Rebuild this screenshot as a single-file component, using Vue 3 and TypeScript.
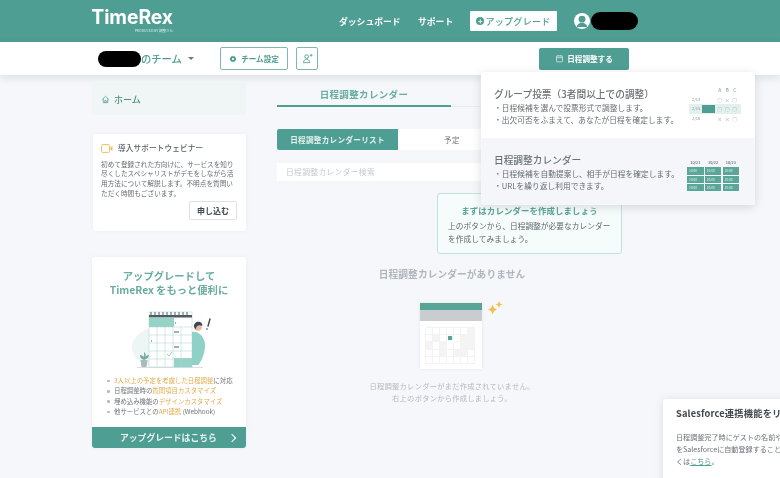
<script setup lang="ts">
const perks = [
  [['3人以上の予定を考慮した日程調整', true], ['に対応', false]],
  [['日程調整時の', false], ['質問項目カスタマイズ', true]],
  [['埋め込み機能の', false], ['デザインカスタマイズ', true]],
  [['他サービスとの', false], ['API連携', true], [' (Webhook)', false]],
] as [string, boolean][][]
const emptyCells = Array.from({ length: 35 }, (_, i) => i)
const shadedCells = [6, 8, 12, 13, 14, 16, 19, 20, 23, 25, 26]
const calHeads = ['10/21', '10/22', '10/23']
const calSlots = Array.from({ length: 9 }, () => '10:00')
const polls = [
  { d: '2/14', v: ['○', '×', '○'], on: false },
  { d: '2/15', v: ['○', '○', '○'], on: true },
  { d: '2/16', v: ['×', '×', '○'], on: false },
]
const gridX = [65, 73, 81, 89]
const gridY = [21, 29, 37, 45, 53]
const rings = [59, 63, 67, 71, 75, 79, 83, 87, 91, 95]
</script>

<template>
  <div class="page">
    <header class="top">
      <div class="logo">
        <span class="logo-name">TimeRex</span>
        <span class="logo-by">PRODUCED BY 調整さん</span>
      </div>
      <nav class="nav">
        <a class="nav-link">ダッシュボード</a>
        <a class="nav-link">サポート</a>
        <button class="upgrade-top"><span class="plus">+</span>アップグレード</button>
        <span class="user">
          <svg class="avatar" viewBox="0 0 16 16">
            <circle cx="8" cy="8" r="8" fill="#fff" />
            <circle cx="8" cy="6.2" r="3.4" fill="#4f9e93" />
            <path d="M2.6 14c.8-3 2.9-4.2 5.4-4.2s4.600 1.200 5.400 4.200" fill="#4f9e93" />
          </svg>
          <span class="mask mask-user"></span>
        </span>
      </nav>
    </header>

    <div class="subbar">
      <span class="mask mask-team"></span>
      <span class="team-name">のチーム</span>
      <span class="caret"></span>
      <button class="outline settings">
        <svg viewBox="0 0 12 12" class="gear">
          <path d="M6 .8l1.100 1.500 1.800-.5.300 1.800 1.800.6-.8 1.800.8 1.800-1.800.6-.3 1.800-1.800-.5L6 11.200 4.900 9.700l-1.800.5-.3-1.800L1 7.800l.8-1.800L1 4.200l1.800-.6.3-1.800 1.800.5z" fill="#4f9e93" />
          <circle cx="6" cy="6" r="1.600" fill="#fff" />
        </svg>
        チーム設定
      </button>
      <button class="outline invite">
        <svg viewBox="0 0 12 12" class="invite-icon">
          <circle cx="5" cy="4" r="2" fill="none" stroke="#4f9e93" />
          <path d="M1.500 10.500c.3-2.400 1.600-3.500 3.500-3.500s3.200 1.100 3.500 3.500zM8.500 2.500h3M10 1v3" fill="none" stroke="#4f9e93" stroke-width=".9" />
        </svg>
      </button>
      <button class="primary">
        <svg viewBox="0 0 12 12" class="cal-icon">
          <rect x="2" y="2.500" width="8" height="8" rx=".8" fill="none" stroke="#dcebe9" />
          <path d="M2 5h8M4 1.500v2M8 1.500v2" stroke="#dcebe9" />
        </svg>
        日程調整する
      </button>
    </div>

    <div class="body">
      <aside class="side">
        <div class="home">
          <svg viewBox="0 0 12 12" class="home-icon">
            <path d="M1.500 6 6 1.800 10.500 6M3 5v5.200h6V5M5 10.200V7.500h2v2.700" fill="none" stroke="#4f9e93" />
          </svg>
          ホーム
        </div>

        <section class="card webinar">
          <h3 class="webinar-title">
            <svg viewBox="0 0 12 9" class="video">
              <rect x=".6" y=".6" width="8" height="7.800" rx="1" fill="none" stroke="#f0bf63" stroke-width="1" />
              <path d="M9.500 3.200 11.500 2v5L9.500 5.800z" fill="#f0bf63" />
            </svg>
            導入サポートウェビナー
          </h3>
          <p class="webinar-text">初めて登録された方向けに、サービスを知り尽くしたスペシャリストがデモをしながら活用方法について解説します。不明点を質問いただく時間もございます。</p>
          <div class="apply-row"><button class="apply">申し込む</button></div>
        </section>

        <section class="card upgrade">
          <h2 class="up-title">アップグレードして<br />TimeRex をもっと便利に</h2>
          <svg class="up-art" viewBox="0 0 154 62">
            <ellipse cx="70" cy="41" rx="30" ry="21" fill="#edf6f5" />
            <path d="M45 61.500h66" stroke="#dcdde8" stroke-width="1" />
            <rect x="57" y="6" width="43" height="55" fill="#fff" stroke="#a9d5cf" stroke-width=".5" />
            <rect x="57" y="9" width="43" height="2.500" fill="#4d5c5e" />
            <path v-for="r in rings" :key="r" :d="`M${r} 6v4`" stroke="#4d5c5e" stroke-width="1" />
            <rect x="57" y="11.500" width="25" height="9.500" fill="#97d2c9" />
            <rect x="82" y="52" width="18" height="9" fill="#97d2c9" />
            <path v-for="x in gridX" :key="x" :d="`M${x} 21v40`" stroke="#a9d5cf" stroke-width=".5" />
            <path v-for="y in gridY" :key="y" :d="`M57 ${y}h43`" stroke="#a9d5cf" stroke-width=".5" />
            <path d="M83 17h1M82 26h5M82 41h5M59 35h1" stroke="#4d5c5e" stroke-width="1" />
            <path d="M75 48l2 2 3-4" stroke="#97d2c9" stroke-width="1" fill="none" />
            <path d="M100 26c6-1 12 4 13 12 .5 7-3 17-7 21h-6z" fill="#8fd0c7" />
            <circle cx="106" cy="21" r="3.800" fill="#e9b9a4" />
            <path d="M102 21c-.5-4 3-6 6-5 2 .7 2.500 2.500 2.200 4-2-1.500-5-1-6 1.500l-.5 2z" fill="#3d4658" />
            <path d="M118 13l-2 7" stroke="#3d4658" stroke-width="1.400" stroke-linecap="round" />
            <circle cx="115" cy="23" r=".8" fill="#3d4658" />
            <path d="M52 54c-3-1-4-3-4-5 2 0 3 1 4 2 0-2 0-3 0-5 2 2 2 3 1 5 1-1 2-2 4-2 0 2-2 4-5 5z" fill="#72a99f" />
            <path d="M48.500 54h7l-1 7h-5z" fill="#a7bdb9" />
          </svg>
          <ul class="perks">
            <li v-for="(p, i) in perks" :key="i">
              <span v-for="(s, j) in p" :key="j" :class="{ hot: s[1] }">{{ s[0] }}</span>
            </li>
          </ul>
          <button class="up-cta"><span>アップグレードはこちら</span><span class="chev"></span></button>
        </section>
      </aside>

      <main class="main">
        <div class="tabs">
          <div class="tab active">日程調整カレンダー</div>
          <div class="tab"></div>
        </div>
        <div class="segments">
          <div class="seg on">日程調整カレンダーリスト</div>
          <div class="seg mid">予定</div>
          <div class="seg"></div>
        </div>
        <div class="search">日程調整カレンダー検索</div>

        <div class="empty">
          <h4 class="empty-title">日程調整カレンダーがありません</h4>
          <div class="empty-art">
            <div class="empty-cal">
              <div class="e-green"></div>
              <div class="e-grey"></div>
              <div class="e-grid">
                <i v-for="c in emptyCells" :key="c" :class="{ shade: shadedCells.includes(c), mark: c === 10 }"></i>
              </div>
            </div>
            <svg class="sparkle" viewBox="0 0 16 16">
              <path d="M5.500 4.500 7 8l3 1.500L7 11l-1.500 3.500L4 11 1 9.500 4 8zM12 1l1 2.500 2.500 1-2.500 1L12 8l-1-2.500-2.500-1 2.500-1z" fill="#f0c04f" />
            </svg>
          </div>
          <p class="empty-text">日程調整カレンダーがまだ作成されていません。<br />右上のボタンから作成しましょう。</p>
        </div>

        <div class="hint">
          <div class="hint-title">まずはカレンダーを作成しましょう</div>
          <p class="hint-text">上のボタンから、日程調整が必要なカレンダーを作成してみましょう。</p>
        </div>
      </main>
    </div>

    <div class="menu">
      <div class="menu-item">
        <div class="menu-copy">
          <div class="menu-title">グループ投票（3者間以上での調整）</div>
          <div class="menu-line">・日程候補を選んで投票形式で調整します。</div>
          <div class="menu-line">・出欠可否をふまえて、あなたが日程を確定します。</div>
        </div>
        <div class="poll">
          <div class="poll-row head"><span></span><b>A</b><b>B</b><b>C</b></div>
          <div v-for="p in polls" :key="p.d" class="poll-row" :class="{ sel: p.on }">
            <span class="poll-date">{{ p.d }}<em v-if="p.on"></em></span>
            <b v-for="(v, i) in p.v" :key="i">{{ v }}</b>
          </div>
        </div>
      </div>
      <div class="menu-item alt">
        <div class="menu-copy">
          <div class="menu-title">日程調整カレンダー</div>
          <div class="menu-line">・日程候補を自動提案し、相手が日程を確定します。</div>
          <div class="menu-line">・URLを繰り返し利用できます。</div>
        </div>
        <div class="slots">
          <span v-for="h in calHeads" :key="h" class="slot-head">{{ h }}</span>
          <span v-for="(s, i) in calSlots" :key="i" class="slot">{{ s }}</span>
        </div>
      </div>
    </div>

    <aside class="notice">
      <div class="notice-title">Salesforce連携機能をリリースしました</div>
      <p class="notice-text">日程調整完了時にゲストの名前やメールアドレス<br />をSalesforceに自動登録することができます。詳し<br />くは<a>こちら</a>。</p>
    </aside>
  </div>
</template>

<style>
html, body { margin: 0; background: #f5f7fa; }
</style>

<style scoped>
* { box-sizing: border-box; }
.page {
  position: relative; width: 780px; height: 478px; overflow: hidden; background: #f5f7fa;
  font-family: "Noto Sans CJK JP", "Noto Sans", sans-serif; color: #6b7278;
  filter: blur(.35px);
}
button { font-family: inherit; cursor: pointer; }
.top { height: 42px; background: #4f9e93; display: flex; align-items: center; padding-left: 92px; }
.logo { display: flex; flex-direction: column; align-items: flex-end; width: 81px; margin-top: -3px; }
.logo-name { font: 700 19.400px/21px "Inter", "Liberation Sans", sans-serif; color: #fff; letter-spacing: -.1px; }
.logo-by { font-size: 3.500px; line-height: 5px; color: #d8ebe8; white-space: nowrap; }
.nav { display: flex; align-items: center; margin-left: 166px; }
.nav-link { font-size: 8.800px; font-weight: 700; color: #fff; margin-right: 18px; line-height: 13px; width: 61px; white-space: nowrap; }
.nav-link + .nav-link { width: 34px; }
.upgrade-top { width: 87px; height: 20px; border: 0; background: #fff; color: #4f9e93; font-size: 9px; font-weight: 500; border-radius: 1px; display: flex; align-items: center; justify-content: center; padding: 0; letter-spacing: .3px; }
.plus { width: 8px; height: 8px; border-radius: 50%; background: #4f9e93; color: #fff; font-size: 8px; line-height: 8px; margin-right: 1px; text-align: center; }
.user { display: flex; align-items: center; margin-left: 17px; }
.avatar { width: 16px; height: 16px; }
.mask { display: block; background: #000; border-radius: 10px; }
.mask-user { width: 47px; height: 18px; margin-left: 1px; }

.subbar { height: 33px; background: #fff; display: flex; align-items: center; padding-left: 98px; box-shadow: 0 3px 8px rgba(60, 70, 80, .12); position: relative; }
.mask-team { width: 43px; height: 16px; }
.team-name { font-size: 10.300px; font-weight: 500; color: #4f9e93; width: 39px; white-space: nowrap; }
.caret { width: 0; height: 0; border: 3px solid transparent; border-top: 3px solid #6f7b7a; margin: 3px 0 0 8px; }
.outline { background: #fff; border: 1px solid #7fb8b0; border-radius: 2px; color: #4f9e93; height: 23px; display: flex; align-items: center; justify-content: center; padding: 0; }
.settings { width: 68px; margin-left: 26px; font-size: 7.600px; font-weight: 700; white-space: nowrap; }
.gear { width: 8px; height: 8px; margin-right: 4px; }
.invite { width: 22px; margin-left: 8px; }
.invite-icon { width: 11px; height: 11px; }
.primary { width: 90px; height: 22px; margin-left: 221px; border: 0; background: #4f9e93; color: #fff; border-radius: 2px; font-size: 7.600px; font-weight: 700; display: flex; align-items: center; justify-content: center; padding: 0; }
.cal-icon { width: 9px; height: 9px; margin-right: 3px; }

.body { display: flex; padding-left: 92px; }
.side { width: 154px; display: flex; flex-direction: column; padding-top: 8px; }
.home { height: 32px; background: #f0f5f5; border-radius: 2px; display: flex; align-items: center; padding-left: 9px; font-size: 9px; font-weight: 500; color: #4f8f86; }
.home-icon { width: 9px; height: 9px; margin-right: 4px; }
.card { background: #fff; border-radius: 3px; box-shadow: 0 0 4px rgba(60, 70, 80, .06); }
.webinar { height: 97px; margin: 19px 0 0 1px; padding: 8px 9px 0 8px; }
.webinar-title { margin: 0; display: flex; align-items: center; font-size: 7.600px; font-weight: 500; color: #555e63; height: 12px; line-height: 12px; letter-spacing: .15px; }
.video { width: 12px; height: 9px; margin-right: 5px; flex: none; }
.webinar-text { margin: 5.500px 0 0; font-size: 6.650px; line-height: 9.900px; color: #666c70; width: 136px; }
.apply-row { display: flex; justify-content: flex-end; margin-top: 2px; }
.apply { width: 48px; height: 19px; padding: 0; border: 1px solid #dfe2e4; background: #fff; border-radius: 2px; font-size: 8px; font-weight: 700; color: #444b50; }

.upgrade { height: 191px; margin-top: 26px; display: flex; flex-direction: column; }
.up-title { margin: 12px 0 0; text-align: center; font-size: 10.300px; line-height: 14px; font-weight: 700; color: #6aaca2; }
.up-art { display: block; width: 154px; height: 62px; margin-top: 9px; flex: none; }
.perks { list-style: none; margin: 8px 0 0; padding: 0 0 0 15px; font-size: 6.400px; line-height: 10.300px; color: #6d7478; white-space: nowrap; }
.perks li { display: flex; align-items: center; }
.perks li::before { content: ""; width: 2.500px; height: 2.500px; border-radius: 50%; background: #b5babc; margin-right: 4.500px; }
.hot { color: #e3ab4a; }
.perks span { white-space: pre; }
.up-cta { margin-top: auto; height: 21px; border: 0; border-radius: 0 0 3px 3px; background: #4f9e93; color: #e8f4f2; font-size: 8.800px; font-weight: 700; display: flex; align-items: center; justify-content: space-between; padding: 0 11px 0 28px; }
.chev { width: 6px; height: 6px; border-top: 1.500px solid #fff; border-right: 1.500px solid #fff; transform: rotate(45deg); }

.main { position: relative; width: 350px; margin-left: 31px; padding-top: 8px; }
.tabs { display: flex; height: 24px; }
.tab { flex: 1; border-bottom: 1px solid #e7ecee; text-align: center; font-size: 9.500px; font-weight: 700; color: #6aaca2; line-height: 24px; }
.tab.active { flex: 0 0 174px; border-bottom: 2px solid #4f9e93; line-height: 23px; letter-spacing: .35px; }
.segments { display: flex; height: 21px; margin-top: 22px; background: #fff; }
.seg { font-size: 7.600px; font-weight: 700; text-align: center; line-height: 21px; flex: 1; letter-spacing: .3px; white-space: nowrap; }
.seg.on { flex: 0 0 121px; background: #4f9e93; color: #e4f1ef; border-radius: 2px 0 0 2px; }
.seg.mid { flex: 0 0 108px; color: #6f767b; font-weight: 400; }
.search { height: 18px; margin-top: 13px; background: #fff; padding-left: 9px; font-size: 7.800px; line-height: 18px; color: #c6cbcf; letter-spacing: .3px; }
.empty { display: flex; flex-direction: column; align-items: center; margin-top: 86px; }
.empty-title { margin: 0; font-size: 9.700px; line-height: 14px; font-weight: 700; color: #b0b5bd; letter-spacing: .1px; }
.empty-art { position: relative; margin: 22px 2px 0 0; width: 62px; height: 66px; }
.empty-cal { width: 62px; height: 66px; background: #fff; display: flex; flex-direction: column; box-shadow: 0 0 3px rgba(60, 70, 80, .1); }
.e-green { height: 7px; background: #57a597; }
.e-grey { height: 11px; background: #c9cdd0; }
.e-grid { display: grid; grid-template-columns: repeat(7, 7px); grid-auto-rows: 7.200px; margin: 6px 0 0 5px; border-top: .5px solid #f3f3f3; border-left: .5px solid #f3f3f3; width: fit-content; }
.e-grid i { border-right: .5px solid #f3f3f3; border-bottom: .5px solid #f3f3f3; }
.e-grid i.shade { background: #f4f4f4; }
.e-grid i.mark { background: #57a597; margin: 1px 1px; }
.sparkle { position: absolute; left: 67px; top: -3px; width: 16px; height: 16px; }
.empty-text { margin: 12px 0 0; text-align: center; font-size: 7.300px; line-height: 11.500px; color: #b5b9bf; letter-spacing: .22px; }
.hint { position: absolute; left: 160px; top: 118px; width: 185px; height: 61px; background: #f6fcfb; border: 1px solid #bfe3de; border-radius: 3px; padding: 10px 10px; }
.hint-title { text-align: center; font-size: 8.400px; line-height: 12px; font-weight: 700; color: #5ba398; letter-spacing: .15px; }
.hint-text { margin: 4px 0 0; font-size: 7.700px; line-height: 12.500px; color: #5f676c; letter-spacing: .05px; }

.menu { position: absolute; left: 481px; top: 72px; width: 274px; height: 133px; background: #fff; border-radius: 3px; box-shadow: 0 2px 10px rgba(60, 70, 80, .18); overflow: hidden; display: flex; flex-direction: column; }
.menu-item { height: 66px; display: flex; padding: 16px 0 0 13px; }
.menu-item.alt { height: 67px; background: #f4f6f9; }
.menu-copy { width: 194px; flex: none; }
.menu-title { font-size: 9.700px; line-height: 13px; color: #6b7177; font-weight: 500; margin-bottom: 1px; white-space: nowrap; }
.menu-line { font-size: 7.700px; line-height: 11.500px; color: #666c72; white-space: nowrap; letter-spacing: .05px; }
.poll { width: 52px; margin: -3px 0 0 1px; font-size: 4px; color: #8d9699; }
.poll-row { display: grid; grid-template-columns: 27px 7.500px 7.500px 7.500px; height: 9.700px; line-height: 9.700px; text-align: center; }
.poll-row.sel { background: #e3f1ee; }
.poll-row b { font-weight: 400; font-size: 5px; color: #7f9f9a; }
.poll-date { position: relative; text-align: left; padding-left: 3px; font-size: 4px; }
.poll-date em { position: absolute; left: 13px; top: 1px; width: 13px; height: 7.700px; background: #4f9e93; }
.slots { display: grid; grid-template-columns: repeat(3, 16.600px); column-gap: 1.200px; row-gap: 1px; grid-auto-rows: 7.300px; margin: 5px 0 0 -1px; font-size: 3.200px; }
.slot-head { text-align: center; font-size: 3.800px; line-height: 7px; color: #55616a; font-weight: 500; }
.slot { background: #5aa699; color: #d9eeea; padding-left: 2px; line-height: 7.300px; }

.notice { position: absolute; left: 663px; top: 399px; width: 320px; height: 110px; background: #fff; border-radius: 3px; box-shadow: 0 1px 8px rgba(60, 70, 80, .14); padding: 7px 13px; }
.notice-title { font-size: 9.300px; line-height: 14px; font-weight: 700; color: #41484d; white-space: nowrap; letter-spacing: .15px; }
.notice-text { margin: 12px 0 0; font-size: 7.100px; line-height: 11.800px; color: #6a7176; white-space: nowrap; }
.notice-text a { color: #4f9e93; text-decoration: underline; }
</style>
